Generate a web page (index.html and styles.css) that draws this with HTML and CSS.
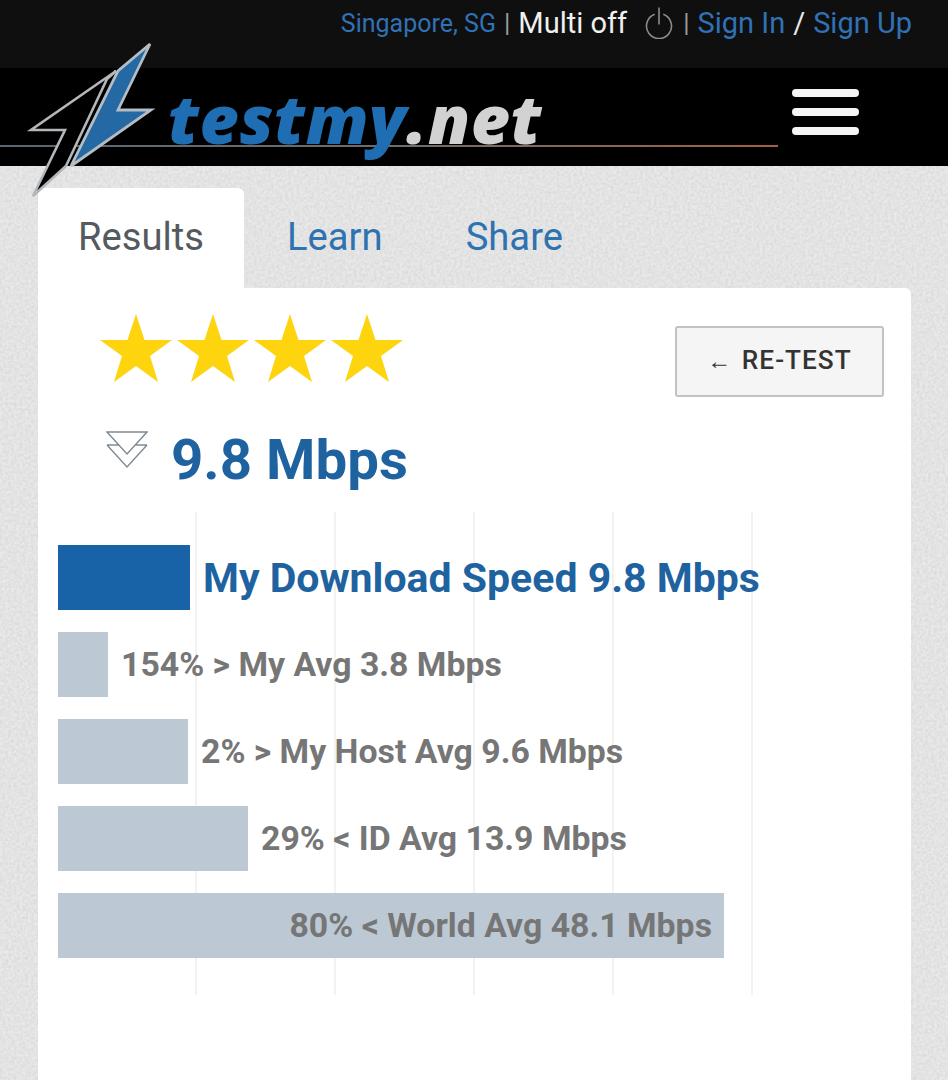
FILE: index.html
```html
<!DOCTYPE html>
<html lang="en">
  <head>
    <meta charset="UTF-8" />
    <meta name="viewport" content="width=device-width, initial-scale=1.0" />
    <title>testmy.net</title>
    <link rel="stylesheet" href="styles.css">
  </head>
  <body>
    <!-- Paper texture behind the page -->
    <svg class="paper" width="948" height="1080" aria-hidden="true">
      <filter id="grain">
        <feTurbulence type="fractalNoise" baseFrequency="0.35" numOctaves="3" seed="4" />
        <feColorMatrix type="matrix" values="0 0 0 0 0.45  0 0 0 0 0.45  0 0 0 0 0.45  0.5 0 0 0 -0.14" />
      </filter>
      <rect width="948" height="1080" fill="#e9e9e9" />
      <rect width="948" height="1080" filter="url(#grain)" />
    </svg>

    <div class="top-bar">
      <span class="location">Singapore, SG</span>
      <span class="sep">|</span>
      <span class="multi">Multi off</span>
      <svg class="power" width="30" height="34" viewBox="0 0 30 34">
        <path d="M10.7 9.3A12.5 12.5 0 1 0 19.3 9.3" fill="none" stroke="#8c8c8c" stroke-width="1.6" />
        <path d="M15 2.5v17" stroke="#8c8c8c" stroke-width="1.6" />
      </svg>
      <span class="sep">|</span>
      <a class="link">Sign In</a>
      <span class="slash">/</span>
      <a class="link">Sign Up</a>
    </div>

    <header class="header">
      <div class="header-line"></div>
      <svg class="bolt" width="130" height="162" viewBox="26 40 130 162">
        <polygon points="116,71 31,130 65,130 33,196 66,166 107,79" fill="#000" stroke="#b4b7ba" stroke-width="2.6" stroke-linejoin="miter" />
        <polygon points="150,44 118,110 151,110 71,166 118,71" fill="#2468a4" stroke="#b4bcc4" stroke-width="2.8" stroke-linejoin="miter" />
      </svg>
      <div class="logo-text"><span class="logo-blue">testmy</span><span class="logo-grey">.net</span></div>
      <div class="burger">
        <span></span>
        <span></span>
        <span></span>
      </div>
    </header>

    <main class="content">
      <nav class="tabs">
        <a class="tab active">Results</a>
        <a class="tab">Learn</a>
        <a class="tab">Share</a>
      </nav>

      <section class="card">
        <div class="rating-row">
          <div class="stars">
            <svg class="star" viewBox="0 0 72 68"><polygon points="36,0 44.5,26 72,26 50,42 58,68 36,52 14,68 22,42 0,26 27.5,26" /></svg>
            <svg class="star" viewBox="0 0 72 68"><polygon points="36,0 44.5,26 72,26 50,42 58,68 36,52 14,68 22,42 0,26 27.5,26" /></svg>
            <svg class="star" viewBox="0 0 72 68"><polygon points="36,0 44.5,26 72,26 50,42 58,68 36,52 14,68 22,42 0,26 27.5,26" /></svg>
            <svg class="star" viewBox="0 0 72 68"><polygon points="36,0 44.5,26 72,26 50,42 58,68 36,52 14,68 22,42 0,26 27.5,26" /></svg>
          </div>
          <button class="retest"><span class="arrow">←</span> RE-TEST</button>
        </div>

        <div class="speed-row">
          <svg class="chevrons" width="42" height="38" viewBox="0 0 42 38">
            <path d="M1 1h40L21 23zM1 14h12M29 14h12M1 14l20 22 20-22" fill="none" stroke="#7d8a94" stroke-width="1.4" />
          </svg>
          <div class="speed">9.8 Mbps</div>
        </div>

        <div class="chart">
          <div class="grid-lines">
            <span></span><span></span><span></span><span></span><span></span>
          </div>
          <div class="row main">
            <div class="bar" style="width: 132px"></div>
            <div class="label">My Download Speed 9.8 Mbps</div>
          </div>
          <div class="row">
            <div class="bar" style="width: 50px"></div>
            <div class="label">154% &gt; My Avg 3.8 Mbps</div>
          </div>
          <div class="row">
            <div class="bar" style="width: 130px"></div>
            <div class="label">2% &gt; My Host Avg 9.6 Mbps</div>
          </div>
          <div class="row">
            <div class="bar" style="width: 190px"></div>
            <div class="label">29% &lt; ID Avg 13.9 Mbps</div>
          </div>
          <div class="row">
            <div class="bar inside" style="width: 666px">
              <div class="label">80% &lt; World Avg 48.1 Mbps</div>
            </div>
          </div>
        </div>
      </section>
    </main>
  </body>
</html>
```

FILE: styles.css
```css
html,
body {
  height: 1080px;
}

body {
  margin: 0;
  padding: 0;
  overflow: hidden;
  position: relative;
  font-family: Roboto, Arial, sans-serif;
  background-color: #e9e9e9;
}

.paper {
  position: absolute;
  top: 0;
  left: 0;
  z-index: -1;
}

/* Top bar */
.top-bar {
  height: 68px;
  box-sizing: border-box;
  padding: 4px 36px 26px 0;
  display: flex;
  justify-content: flex-end;
  align-items: center;
  background-color: #0f0f0f;
  color: #e8e8e8;
}

.location {
  font-size: 25px;
  color: #2f72b6;
}

.sep {
  font-size: 26px;
  color: #9a9a9a;
  margin: 0 8px;
}

.multi {
  font-size: 29px;
  color: #f0f0f0;
}

.power {
  margin-left: 17px;
  margin-bottom: 3px;
}

.top-bar .power + .sep {
  margin: 0 8px 0 9px;
}

.link {
  font-size: 29px;
  color: #2f72b6;
}

.slash {
  font-size: 29px;
  color: #e8e8e8;
  margin: 0 8px;
}

/* Logo header */
.header {
  position: relative;
  height: 98px;
  box-sizing: border-box;
  padding-left: 168px;
  padding-right: 89px;
  display: flex;
  justify-content: space-between;
  align-items: flex-start;
  background-color: #000;
}

.header-line {
  position: absolute;
  left: 0;
  top: 77px;
  width: 778px;
  height: 2px;
  background: linear-gradient(to right, #5a6670, #6e6e6e 50%, #a3603f);
}

.bolt {
  position: absolute;
  left: 26px;
  top: -28px;
  z-index: 2;
}

.logo-text {
  position: relative;
  font-family: "Open Sans", sans-serif;
  font-style: italic;
  font-weight: 800;
  font-size: 68px;
  line-height: 100px;
  letter-spacing: 0.5px;
}

.logo-blue {
  color: #1f6db3;
}

.logo-grey {
  color: #d2d2d2;
}

.burger {
  display: flex;
  flex-direction: column;
  gap: 11px;
  padding-top: 21px;
}

.burger span {
  display: block;
  width: 67px;
  height: 8px;
  border-radius: 4px;
  background-color: #f5f5f5;
}

/* Tabs */
.content {
  padding: 22px 37px 0 38px;
}

.tabs {
  display: flex;
  gap: 3px;
}

.tab {
  padding: 0 40px;
  height: 100px;
  line-height: 98px;
  font-size: 38.2px;
  color: #2f72b0;
  border-radius: 6px 6px 0 0;
}

.tab.active {
  background-color: #fff;
  color: #555a60;
}

/* Card */
.card {
  background-color: #fff;
  border-radius: 0 6px 0 0;
  height: 792px;
  padding: 26px 27px 0 20px;
}

.rating-row {
  display: flex;
  justify-content: space-between;
  align-items: flex-start;
  padding-left: 42px;
}

.stars {
  display: flex;
  gap: 5px;
}

.star {
  width: 72px;
  height: 68px;
  fill: #fdd40d;
}

.retest {
  width: 209px;
  height: 71px;
  margin-top: 12px;
  padding-bottom: 5px;
  border: 2px solid #c2c2c2;
  border-radius: 3px;
  background-color: #f5f5f5;
  color: #333;
  font-family: Roboto, Arial, sans-serif;
  font-size: 26.2px;
  font-weight: 500;
  letter-spacing: 1px;
}

.arrow {
  font-size: 24px;
  margin-right: 2px;
}

.speed-row {
  display: flex;
  align-items: flex-start;
  padding-left: 48px;
  margin-top: 34px;
  gap: 23px;
}

.speed {
  font-size: 56.4px;
  font-weight: 700;
  line-height: 60px;
  color: #1f62a0;
  margin-top: -1px;
}

/* Chart */
.chart {
  position: relative;
  margin-top: 22px;
  padding-top: 33px;
  height: 450px;
  display: flex;
  flex-direction: column;
  gap: 22px;
}

.grid-lines {
  position: absolute;
  top: 0;
  left: 137px;
  bottom: 0;
  display: flex;
  gap: 137px;
}

.grid-lines span {
  width: 2px;
  background-color: #f2f2f2;
}

.row {
  position: relative;
  display: flex;
  align-items: center;
  height: 65px;
}

.bar {
  height: 65px;
  background-color: #bcc9d5;
  flex-shrink: 0;
}

.label {
  margin-left: 13px;
  font-size: 33.8px;
  font-weight: 700;
  color: #767676;
  white-space: nowrap;
}

.row.main .bar {
  background-color: #1863a8;
}

.row.main .label {
  font-size: 41px;
  color: #1f62a0;
}

.bar.inside {
  display: flex;
  justify-content: flex-end;
  align-items: center;
  padding-right: 12px;
  box-sizing: border-box;
}
```
